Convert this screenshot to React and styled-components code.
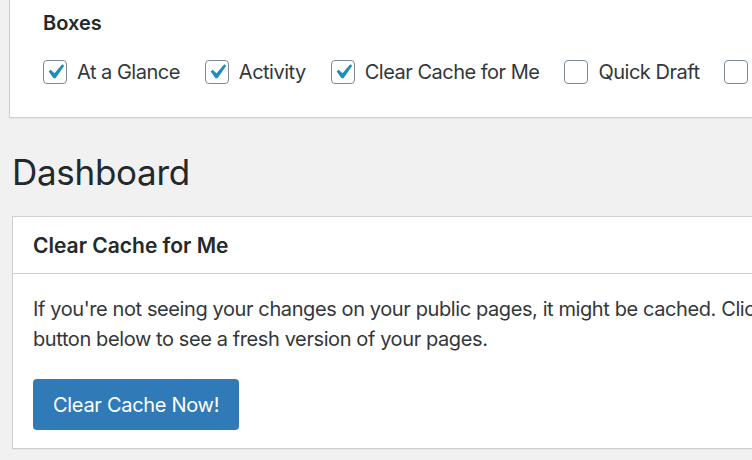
import styled, { createGlobalStyle } from "styled-components";

const GlobalStyle = createGlobalStyle`
  html, body {
    margin: 0;
    padding: 0;
    background: #f1f1f1;
  }
  body {
    font-family: Inter, "Noto Sans", "Liberation Sans", sans-serif;
    color: #32373c;
    -webkit-font-smoothing: antialiased;
  }
`;

const Page = styled.div`
  height: 460px;
  overflow: hidden;
  background: #f1f1f1;
`;

const ScreenOptions = styled.div`
  margin: 0 -60px 0 9px;
  padding: 9px 0 31px 33px;
  background: #fff;
  border: 1px solid #ccd0d4;
  border-top: none;
  box-shadow: 0 1px 1px rgba(0, 0, 0, 0.04);
`;

const Legend = styled.div`
  font-size: 20px;
  line-height: 28px;
  font-weight: 600;
  color: #23282d;
`;

const Options = styled.div`
  display: flex;
  align-items: center;
  margin-top: 21px;
  white-space: nowrap;
`;

const Option = styled.label`
  display: flex;
  align-items: center;
  margin-right: 25px;
  font-size: 20px;
  line-height: 28px;
  letter-spacing: -0.5px;
`;

const Box = styled.span`
  position: relative;
  flex: none;
  box-sizing: border-box;
  width: 24px;
  height: 24px;
  margin-right: 10px;
  border: 1.5px solid #7e8993;
  border-radius: 4px;
  background: #fff;

  svg {
    position: absolute;
    left: -4px;
    top: -4px;
  }
`;

const Content = styled.div`
  margin-left: 12px;
`;

const Title = styled.h1`
  margin: 30px 0 20px;
  font-size: 35px;
  line-height: 48px;
  font-weight: 400;
  letter-spacing: -0.3px;
  color: #23282d;
`;

const Postbox = styled.div`
  margin-right: -60px;
  background: #fff;
  border: 1px solid #ccd0d4;
  box-shadow: 0 1px 1px rgba(0, 0, 0, 0.04);
`;

const PostboxHeader = styled.h2`
  margin: 0;
  height: 56px;
  display: flex;
  align-items: center;
  padding: 0 20px;
  border-bottom: 1px solid #ccd0d4;
  font-size: 21px;
  font-weight: 600;
  color: #23282d;
`;

const Inside = styled.div`
  padding: 20px 20px 18px;
`;

const Text = styled.p`
  margin: 0 0 25px;
  font-size: 20px;
  line-height: 30px;
  letter-spacing: -0.4px;
  white-space: nowrap;
`;

const Button = styled.button`
  display: inline-flex;
  align-items: center;
  height: 51px;
  padding: 0 20px;
  border: none;
  border-radius: 4px;
  background: #317ab8;
  color: #fff;
  font-family: inherit;
  font-size: 20px;
  letter-spacing: -0.3px;
  cursor: pointer;
`;

const boxes = [
  { label: "At a Glance", checked: true },
  { label: "Activity", checked: true },
  { label: "Clear Cache for Me", checked: true },
  { label: "Quick Draft", checked: false },
  { label: "WordPress Events and News", checked: false },
];

const Check = () => (
  <svg width="30" height="30" viewBox="0 0 20 20">
    <path
      fill="#1e8cbe"
      d="M14.83 4.89l1.34.94-5.81 8.38H9.02L5.78 9.67l1.34-1.25 2.57 2.4z"
    />
  </svg>
);

const App = () => {
  return (
    <Page>
      <GlobalStyle />
      <ScreenOptions>
        <Legend>Boxes</Legend>
        <Options>
          {boxes.map(item => (
            <Option key={item.label}>
              <Box>{item.checked && <Check />}</Box>
              {item.label}
            </Option>
          ))}
        </Options>
      </ScreenOptions>
      <Content>
        <Title>Dashboard</Title>
        <Postbox>
          <PostboxHeader>Clear Cache for Me</PostboxHeader>
          <Inside>
            <Text>
              If you're not seeing your changes on your public pages, it might be
              cached. Click the
              <br />
              button below to see a fresh version of your pages.
            </Text>
            <Button>Clear Cache Now!</Button>
          </Inside>
        </Postbox>
      </Content>
    </Page>
  );
};

export default App;
